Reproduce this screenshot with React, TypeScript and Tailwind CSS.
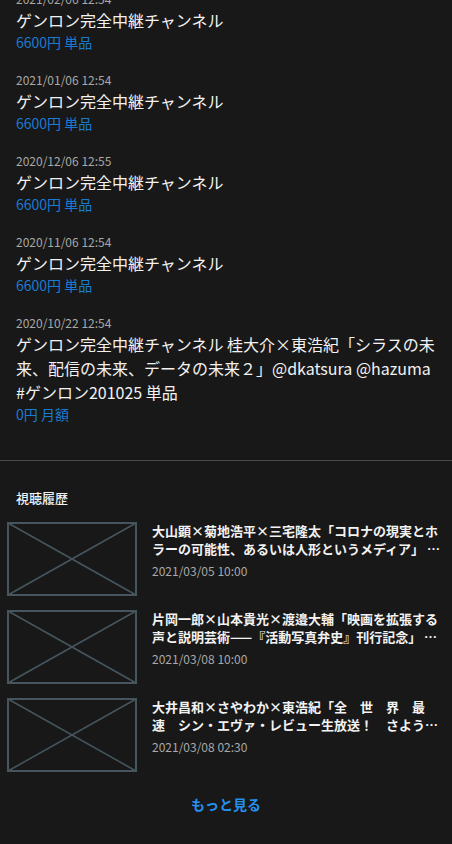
import React from 'react';

interface Purchase {
    date: string;
    title: string;
    price: string;
}

interface HistoryItem {
    title: string;
    date: string;
}

const purchases: Purchase[] = [
    { date: '2021/02/06 12:54', title: 'ゲンロン完全中継チャンネル', price: '6600円 単品' },
    { date: '2021/01/06 12:54', title: 'ゲンロン完全中継チャンネル', price: '6600円 単品' },
    { date: '2020/12/06 12:55', title: 'ゲンロン完全中継チャンネル', price: '6600円 単品' },
    { date: '2020/11/06 12:54', title: 'ゲンロン完全中継チャンネル', price: '6600円 単品' },
    {
        date: '2020/10/22 12:54',
        title: 'ゲンロン完全中継チャンネル 桂大介×東浩紀「シラスの未来、配信の未来、データの未来２」@dkatsura @hazuma #ゲンロン201025 単品',
        price: '0円 月額',
    },
];

const history: HistoryItem[] = [
    {
        title: '大山顕×菊地浩平×三宅隆太「コロナの現実とホラーの可能性、あるいは人形というメディア」 #ゲンロン210305',
        date: '2021/03/05 10:00',
    },
    {
        title: '片岡一郎×山本貴光×渡邉大輔「映画を拡張する声と説明芸術——『活動写真弁史』刊行記念」 #ゲンロン210308',
        date: '2021/03/08 10:00',
    },
    {
        title: '大井昌和×さやわか×東浩紀「全　世　界　最　速　シン・エヴァ・レビュー生放送！　さようなら、全てのエヴァンゲリオン」',
        date: '2021/03/08 02:30',
    },
];

const Placeholder = () => (
    <svg width="130" height="74" viewBox="0 0 130 74" className="shrink-0">
        <rect x="1" y="1" width="128" height="72" fill="none" stroke="#46565e" strokeWidth="2" />
        <line x1="1" y1="1" x2="129" y2="73" stroke="#46565e" strokeWidth="1.5" />
        <line x1="129" y1="1" x2="1" y2="73" stroke="#46565e" strokeWidth="1.5" />
    </svg>
);

export default function App() {
    return (
        <div
            className="min-h-[844px] bg-[#181818] text-[#f2f2f2] overflow-hidden"
            style={{ fontFamily: '"Noto Sans CJK JP", "Noto Sans", sans-serif' }}
        >
            {/* Purchase list */}
            <div className="-mt-[10px] px-4 pb-[36px]">
                {purchases.map((p, i) => (
                    <div key={i} className={i < purchases.length - 1 ? 'pb-[19px]' : ''}>
                        <div className="text-xs leading-[18px] text-[#a8a8a8]">{p.date}</div>
                        <div className="text-base leading-[24px]">{p.title}</div>
                        <div className="text-sm leading-[20px] text-[#1a7bd3]">{p.price}</div>
                    </div>
                ))}
            </div>

            {/* Watch history */}
            <div className="border-t border-[#4a4a4a] pt-[27px]">
                <h2 className="px-4 text-[13px] leading-[20px] font-medium">視聴履歴</h2>
                <div className="mt-[14px] flex flex-col gap-[14px]">
                    {history.map((h, i) => (
                        <div key={i} className="flex items-start gap-[15px] pl-[7px] pr-[10px]">
                            <Placeholder />
                            <div className="min-w-0 flex-1">
                                <div className="text-[13px] leading-[18px] font-bold line-clamp-2">{h.title}</div>
                                <div className="mt-1 text-xs leading-[18px] text-[#a8a8a8]">{h.date}</div>
                            </div>
                        </div>
                    ))}
                </div>
                <div className="mt-[19px] text-center">
                    <button className="text-sm leading-[20px] font-bold text-[#2392ee]">もっと見る</button>
                </div>
            </div>
        </div>
    );
}
